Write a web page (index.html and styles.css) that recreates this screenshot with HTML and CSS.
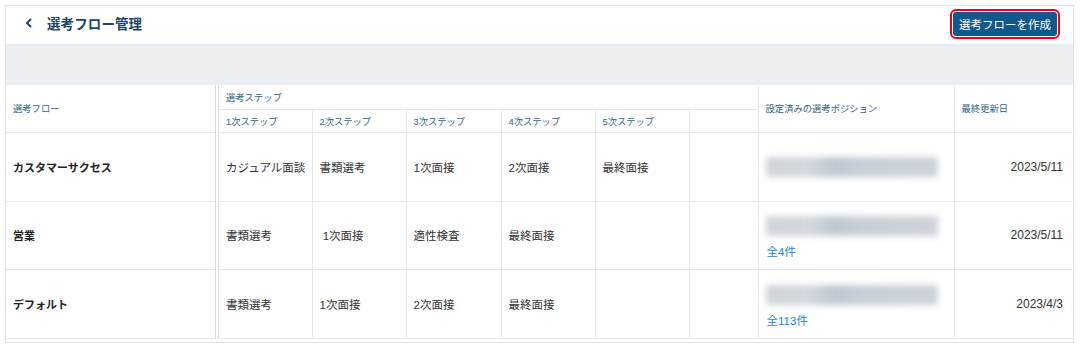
FILE: index.html
```html
<!DOCTYPE html>
<html lang="ja">
<head>
<meta charset="utf-8">
<link rel="stylesheet" href="styles.css">
</head>
<body>
<div class="frame">
  <header class="topbar">
    <div class="title-wrap">
      <svg class="back" width="10" height="12" viewBox="0 0 10 12"><polyline points="6,2 2,6 6,10" fill="none" stroke="#1b4567" stroke-width="2"/></svg>
      <h1 class="title">選考フロー管理</h1>
    </div>
    <button class="create-btn">選考フローを作成</button>
  </header>
  <div class="band"></div>
  <table class="flows">
    <colgroup>
      <col class="c-flow"><col class="c-s1"><col class="c-s2"><col class="c-s3"><col class="c-s4"><col class="c-s5"><col class="c-s6"><col class="c-pos"><col class="c-date">
    </colgroup>
    <thead>
      <tr class="hr1">
        <th rowspan="2" class="th-flow">選考フロー</th>
        <th colspan="6" class="th-group">選考ステップ</th>
        <th rowspan="2">設定済みの選考ポジション</th>
        <th rowspan="2">最終更新日</th>
      </tr>
      <tr class="hr2">
        <th>1次ステップ</th>
        <th>2次ステップ</th>
        <th>3次ステップ</th>
        <th>4次ステップ</th>
        <th>5次ステップ</th>
        <th></th>
      </tr>
    </thead>
    <tbody>
      <tr class="r1">
        <td class="flow-name">カスタマーサクセス</td>
        <td>カジュアル面談</td>
        <td>書類選考</td>
        <td>1次面接</td>
        <td>2次面接</td>
        <td>最終面接</td>
        <td></td>
        <td class="pos"><div class="pos-stack"><div class="blur-bar"></div></div></td>
        <td class="date">2023/5/11</td>
      </tr>
      <tr class="r2">
        <td class="flow-name">営業</td>
        <td>書類選考</td>
        <td>&nbsp;1次面接</td>
        <td>適性検査</td>
        <td>最終面接</td>
        <td></td>
        <td></td>
        <td class="pos"><div class="pos-stack has-more"><div class="blur-bar"></div><a class="more">全4件</a></div></td>
        <td class="date">2023/5/11</td>
      </tr>
      <tr class="r3">
        <td class="flow-name">デフォルト</td>
        <td>書類選考</td>
        <td>1次面接</td>
        <td>2次面接</td>
        <td>最終面接</td>
        <td></td>
        <td></td>
        <td class="pos"><div class="pos-stack has-more"><div class="blur-bar"></div><a class="more">全113件</a></div></td>
        <td class="date">2023/4/3</td>
      </tr>
    </tbody>
  </table>
</div>
</body>
</html>
```
FILE: styles.css
```css
html, body {
  margin: 0;
  background: #ffffff;
}
body {
  padding: 5px 6px 0 5px;
  font-family: "Liberation Sans", "Noto Sans CJK JP", sans-serif;
  color: #333333;
}
.frame {
  border: 1px solid #e2e2e2;
  padding-bottom: 3px;
  background: #ffffff;
}
.topbar {
  height: 38px;
  padding: 0 16px 0 19px;
  border-bottom: 1px solid #e6e8ea;
  display: flex;
  align-items: center;
  justify-content: space-between;
}
.title-wrap {
  display: flex;
  align-items: center;
  gap: 12px;
  margin-bottom: 4px;
}
.back {
  display: block;
}
.title {
  margin: 0;
  font-size: 13.5px;
  font-weight: bold;
  color: #1b4567;
  letter-spacing: 0.1px;
}
.create-btn {
  height: 24px;
  width: 104px;
  padding: 0;
  border: none;
  border-radius: 3px;
  background: #11598c;
  color: #ffffff;
  font-family: "Liberation Sans", "Noto Sans CJK JP", sans-serif;
  font-size: 11.5px;
  outline: 2px solid #ec0018;
  outline-offset: 1px;
  margin-bottom: 2px;
}
.band {
  height: 40px;
  background: #ebeef1;
}
.flows {
  width: 1067px;
  table-layout: fixed;
  border-collapse: collapse;
}
.c-flow { width: 211px; }
.c-s1 { width: 95px; }
.c-s2 { width: 94px; }
.c-s3 { width: 95px; }
.c-s4 { width: 94px; }
.c-s5 { width: 94px; }
.c-s6 { width: 69px; }
.c-pos { width: 196px; }
.c-date { width: 119px; }
.flows th,
.flows td {
  border: 1px solid #e8e8e8;
  padding: 0 0 0 7px;
  text-align: left;
  white-space: nowrap;
}
.flows tr > :first-child {
  border-left: none;
}
.flows tr > :last-child {
  border-right: none;
}
.flows thead tr.hr1 th {
  border-top: none;
}
.flows th {
  font-size: 9.3px;
  font-weight: normal;
  color: #2f6387;
}
.flows .th-flow,
.flows .flow-name {
  padding-left: 7px;
  border-right: 4px double #dcdcdc;
}
.hr1 { height: 24px; }
.hr2 { height: 23px; }
.r1 { height: 69px; }
.r2 { height: 68px; }
.r3 { height: 69px; }
.flows td {
  font-size: 11.5px;
  color: #333333;
}
.flows td.flow-name {
  font-size: 11px;
  font-weight: bold;
  color: #222222;
}
.flows td.date {
  text-align: right;
  padding: 0 10px 0 0;
  font-size: 12px;
}
.flows td.pos {
  padding-left: 5px;
}
.pos-stack {
  display: flex;
  flex-direction: column;
  align-items: flex-start;
  gap: 9px;
}
.pos-stack.has-more {
  padding-top: 6px;
}
.blur-bar {
  width: 172px;
  height: 20px;
  margin-left: 2px;
  background: linear-gradient(90deg, #cfd5da 0%, #d3d8dd 25%, #bfc8d0 40%, #c8cfd6 55%, #cdd3d9 100%);
  filter: blur(3px);
}
.more {
  font-size: 11.5px;
  color: #1a87d0;
  line-height: 15px;
  margin-left: 3px;
}
```
